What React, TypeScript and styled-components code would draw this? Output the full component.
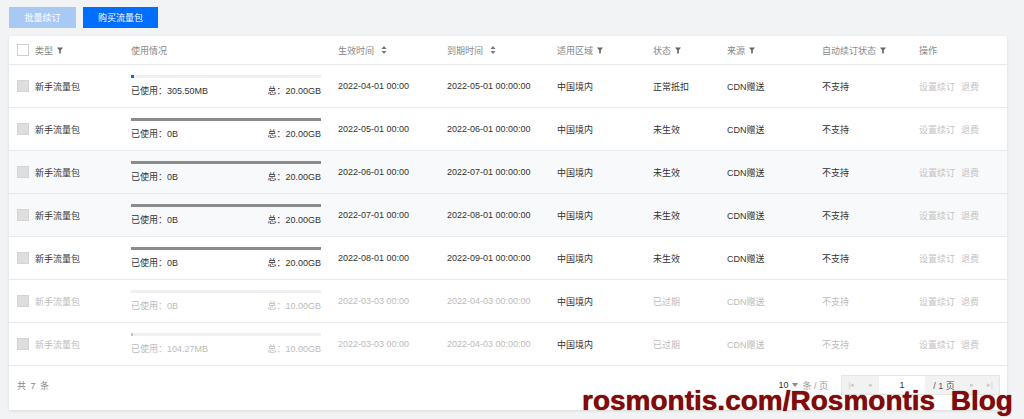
import styled, { createGlobalStyle } from 'styled-components';

const GlobalStyle = createGlobalStyle`
  html, body {
    margin: 0;
    padding: 0;
    background: #f2f3f5;
    font-family: 'Liberation Sans', 'Noto Sans CJK SC', sans-serif;
  }
  * {
    box-sizing: border-box;
  }
`;

const COLS = '18px 96px 207px 109px 110px 96px 74px 95px 97px 1fr';

const Page = styled.div`
  position: relative;
  height: 419px;
  padding: 7px 17px 0 9px;
  overflow: hidden;
`;

const Toolbar = styled.div`
  display: flex;
  gap: 7px;
  margin-bottom: 8px;
`;

const Button = styled.div<{ $primary?: boolean }>`
  height: 21px;
  width: ${(p) => (p.$primary ? 75 : 67)}px;
  display: flex;
  align-items: center;
  justify-content: center;
  font-size: 9px;
  color: #fff;
  background: ${(p) => (p.$primary ? '#006eff' : '#a8c9f4')};
`;

const Card = styled.div`
  background: #fff;
  box-shadow: 0 1px 3px rgba(0, 0, 0, 0.1);
`;

const Row = styled.div<{ $head?: boolean; $shade?: boolean }>`
  display: grid;
  grid-template-columns: ${COLS};
  align-items: center;
  height: ${(p) => (p.$head ? 29 : 43)}px;
  padding-left: 8px;
  border-bottom: 1px solid #e8e9eb;
  background: ${(p) => (p.$shade ? '#f8f9fa' : '#fff')};
  font-size: 9px;
  color: ${(p) => (p.$head ? '#888' : '#333')};
`;

const Cell = styled.div<{ $muted?: boolean }>`
  display: flex;
  align-items: center;
  gap: 4px;
  white-space: nowrap;
  color: ${(p) => (p.$muted ? '#bbb' : 'inherit')};
`;

const Check = styled.div<{ $disabled?: boolean }>`
  width: 12px;
  height: 12px;
  border: 1px solid ${(p) => (p.$disabled ? '#d4d4d4' : '#cfcfcf')};
  background: ${(p) => (p.$disabled ? '#dedede' : '#fff')};
`;

const Usage = styled.div`
  display: flex;
  flex-direction: column;
  gap: 6px;
  padding-right: 17px;
  margin-top: -1px;
`;

const Track = styled.div`
  height: 3px;
  background: #eef0f3;
`;

const Fill = styled.div<{ $color: string }>`
  height: 100%;
  background: ${(p) => p.$color};
`;

const UsageText = styled.div<{ $muted?: boolean }>`
  display: flex;
  justify-content: space-between;
  color: ${(p) => (p.$muted ? '#bbb' : '#333')};
`;

const Ops = styled.div`
  display: flex;
  gap: 6px;
  color: #c4c4c4;
`;

const Footer = styled.div`
  height: 44px;
  display: flex;
  align-items: center;
  justify-content: space-between;
  padding: 0 7px 6px 8px;
  font-size: 9px;
  color: #888;
`;

const Total = styled.span`
  word-spacing: 2px;
`;

const PagerGroup = styled.div`
  display: flex;
  align-items: center;
`;

const PageSize = styled.div`
  display: flex;
  align-items: center;
  gap: 4px;
  margin-right: 13px;
  color: #999;
  b {
    font-weight: normal;
    color: #333;
  }
`;

const Pager = styled.div`
  display: flex;
  height: 20px;
  border: 1px solid #e5e5e5;
  background: #f2f2f2;
`;

const PagerBtn = styled.div<{ $w: number }>`
  width: ${(p) => p.$w}px;
  display: flex;
  align-items: center;
  justify-content: center;
  color: #c8c8c8;
  font-size: 7px;
`;

const PagerInput = styled.div`
  width: 46px;
  background: #fff;
  display: flex;
  align-items: center;
  justify-content: center;
  color: #333;
`;

const PagerTotal = styled.div`
  width: 38px;
  display: flex;
  align-items: center;
  justify-content: center;
  color: #555;
`;

const Watermark = styled.div`
  position: absolute;
  left: 582px;
  top: 387px;
  font-family: 'Liberation Sans', sans-serif;
  font-weight: bold;
  font-size: 28px;
  line-height: 28px;
  color: #850a0c;
  white-space: pre;
  text-shadow: 0 0 1px #4a0000;
`;

const FilterIcon = () => (
  <svg width="6" height="7" viewBox="0 0 6 7">
    <path d="M0 0.5h6L3.8 3.3V6.5H2.2V3.3z" fill="#666" />
  </svg>
);

const SortIcon = () => (
  <svg width="6" height="8" viewBox="0 0 6 8" style={{ marginLeft: 3 }}>
    <path d="M3 0L5.5 3H0.5z M3 8L0.5 5H5.5z" fill="#777" />
  </svg>
);

type Item = {
  used: string;
  total: string;
  fill?: { color: string; width: string };
  start: string;
  end: string;
  status: string;
  disabled?: boolean;
  shade?: boolean;
};

const items: Item[] = [
  { used: '305.50MB', total: '20.00GB', fill: { color: '#006eff', width: '3px' }, start: '2022-04-01 00:00', end: '2022-05-01 00:00:00', status: '正常抵扣' },
  { used: '0B', total: '20.00GB', fill: { color: '#8c8c8c', width: '100%' }, start: '2022-05-01 00:00', end: '2022-06-01 00:00:00', status: '未生效' },
  { used: '0B', total: '20.00GB', fill: { color: '#8c8c8c', width: '100%' }, start: '2022-06-01 00:00', end: '2022-07-01 00:00:00', status: '未生效', shade: true },
  { used: '0B', total: '20.00GB', fill: { color: '#8c8c8c', width: '100%' }, start: '2022-07-01 00:00', end: '2022-08-01 00:00:00', status: '未生效', shade: true },
  { used: '0B', total: '20.00GB', fill: { color: '#8c8c8c', width: '100%' }, start: '2022-08-01 00:00', end: '2022-09-01 00:00:00', status: '未生效' },
  { used: '0B', total: '10.00GB', start: '2022-03-03 00:00', end: '2022-04-03 00:00:00', status: '已过期', disabled: true },
  { used: '104.27MB', total: '10.00GB', fill: { color: '#c4c4c4', width: '2px' }, start: '2022-03-03 00:00', end: '2022-04-03 00:00:00', status: '已过期', disabled: true },
];

function App() {
  return (
    <>
      <GlobalStyle />
      <Page>
        <Toolbar>
          <Button>批量续订</Button>
          <Button $primary>购买流量包</Button>
        </Toolbar>
        <Card>
          <Row $head>
            <Cell><Check /></Cell>
            <Cell>类型 <FilterIcon /></Cell>
            <Cell>使用情况</Cell>
            <Cell>生效时间 <SortIcon /></Cell>
            <Cell>到期时间 <SortIcon /></Cell>
            <Cell>适用区域 <FilterIcon /></Cell>
            <Cell>状态 <FilterIcon /></Cell>
            <Cell>来源 <FilterIcon /></Cell>
            <Cell>自动续订状态 <FilterIcon /></Cell>
            <Cell>操作</Cell>
          </Row>
          {items.map((it, i) => (
            <Row key={i} $shade={it.shade}>
              <Cell><Check $disabled /></Cell>
              <Cell $muted={it.disabled}>新手流量包</Cell>
              <Usage>
                <Track>
                  {it.fill && <Fill $color={it.fill.color} style={{ width: it.fill.width }} />}
                </Track>
                <UsageText $muted={it.disabled}>
                  <span>已使用：{it.used}</span>
                  <span>总：{it.total}</span>
                </UsageText>
              </Usage>
              <Cell $muted={it.disabled}>{it.start}</Cell>
              <Cell $muted={it.disabled}>{it.end}</Cell>
              <Cell>中国境内</Cell>
              <Cell $muted={it.disabled}>{it.status}</Cell>
              <Cell $muted={it.disabled}>CDN赠送</Cell>
              <Cell $muted={it.disabled}>不支持</Cell>
              <Ops>
                <span>设置续订</span>
                <span>退费</span>
              </Ops>
            </Row>
          ))}
          <Footer>
            <Total>共 7 条</Total>
            <PagerGroup>
              <PageSize>
                <b>10</b>
                <svg width="6" height="4" viewBox="0 0 6 4">
                  <path d="M0 0h6L3 4z" fill="#888" />
                </svg>
                <span>条 / 页</span>
              </PageSize>
              <Pager>
                <PagerBtn $w={19}>|◂</PagerBtn>
                <PagerBtn $w={18}>◂</PagerBtn>
                <PagerInput>1</PagerInput>
                <PagerTotal>/ 1 页</PagerTotal>
                <PagerBtn $w={18}>▸</PagerBtn>
                <PagerBtn $w={18}>▸|</PagerBtn>
              </Pager>
            </PagerGroup>
          </Footer>
        </Card>
        <Watermark>rosmontis.com/Rosmontis  Blog</Watermark>
      </Page>
    </>
  );
}

export default App;
